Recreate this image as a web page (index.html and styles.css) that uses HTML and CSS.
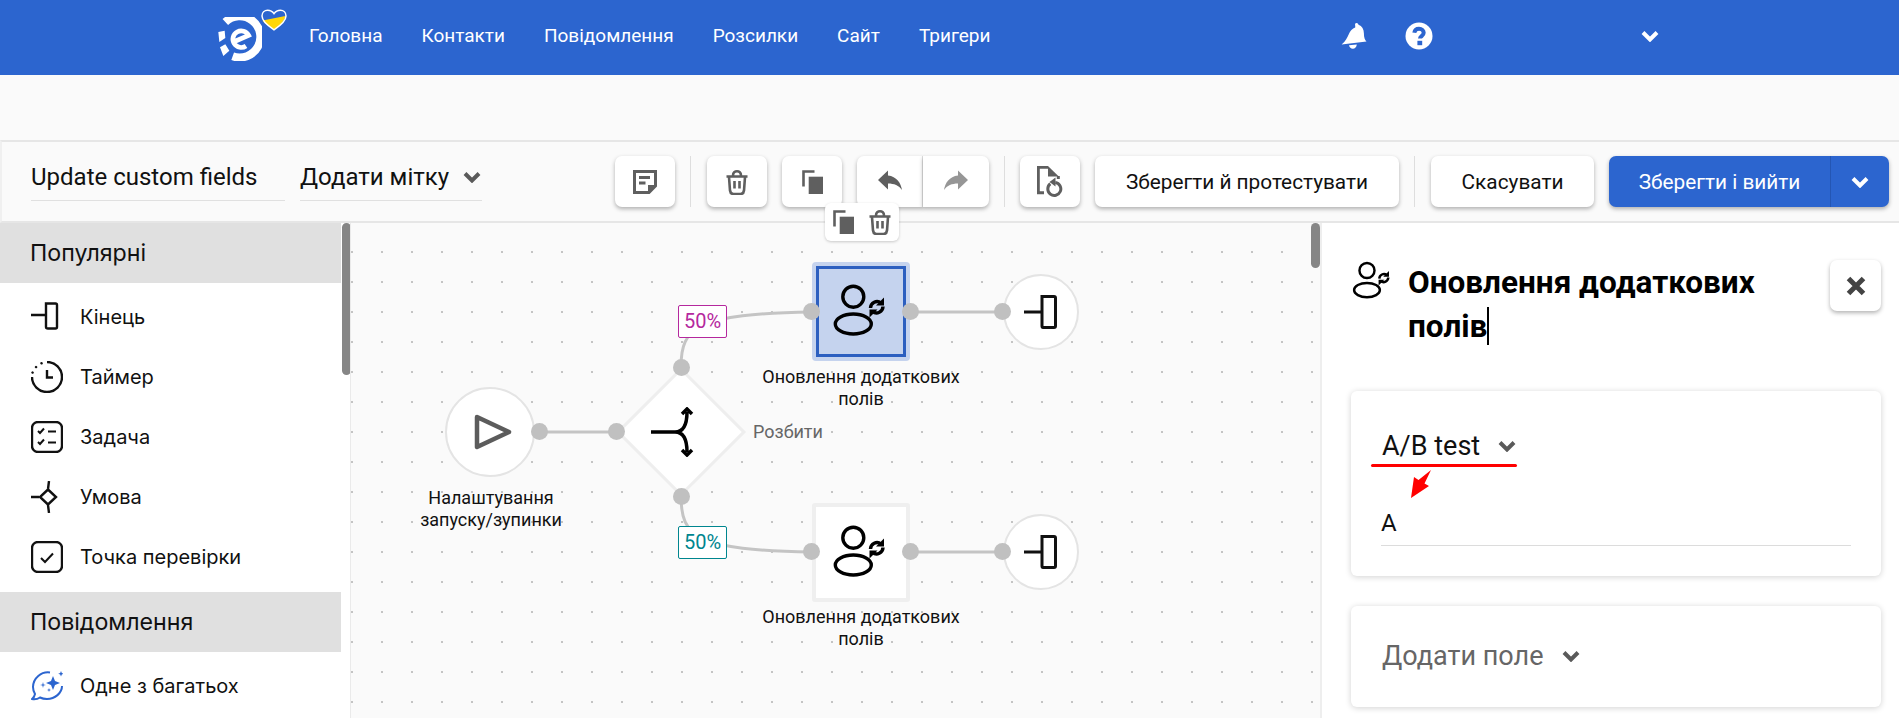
FILE: index.html
```html
<!DOCTYPE html>
<html lang="uk">
<head>
<meta charset="utf-8">
<title>Update custom fields</title>
<link rel="stylesheet" href="styles.css">
</head>
<body>
<header class="topbar">
  <svg class="logo" viewBox="40 50 132 130">
    <path class="logo-ring" d="M62 64 A62 62 0 1 1 84 167"/>
    <path class="logo-e" d="M86 124 L132 104 A25 25 0 1 0 124 136"/>
    <path class="logo-dash" d="M41 94 L60 90 L62 112 L44 124 Z M46 140 L62 131 L74 150 L56 166 Z"/>
  </svg>
  <svg class="heart" viewBox="0 0 26 22">
    <path class="heart-fill" d="M1.6 11.5 L24.4 7 C24 11 20 16 13 20.6 C7 16.5 3 14 1.6 11.5Z"/>
    <path class="heart-line" d="M13 20.8 C5 15.5 1 11 1 7 C1 3.5 3.5 1.2 6.6 1.2 C9.4 1.2 11.6 2.6 13 4.6 C14.4 2.6 16.6 1.2 19.4 1.2 C22.5 1.2 25 3.5 25 7 C25 11 21 15.5 13 20.8Z"/>
  </svg>
  <nav class="nav">
    <a>Головна</a><a>Контакти</a><a>Повідомлення</a><a>Розсилки</a><a>Сайт</a><a>Тригери</a>
  </nav>
  <svg class="bell" viewBox="0 0 26 28"><path d="M14.5 1.2a2 2 0 0 1 3 1.6c3.6 1.4 5.4 4.6 5.4 8.4 0 4.4 1 7 2.6 8.4L.6 22.4c1.6-1 4-3.400 6-7.600 1.600-3.400 3-7.800 7.600-9.400.2-1.800-.2-3-.2-3zM8 23.200l7.800-.8c-.2 2.400-1.800 4.400-4 4.400-1.800 0-3.400-1.600-3.800-3.600z"/></svg>
  <svg class="help" viewBox="0 0 28 28"><circle cx="14" cy="14" r="13.500"/><path class="help-q" d="M9.300 10.800c.4-2.600 2.300-4 4.700-4 2.800 0 4.700 1.700 4.700 4 0 3.200-3.700 3.400-3.700 5.800"/><rect class="help-dot" x="12.400" y="18.800" width="4.800" height="4.400"/></svg>
  <svg class="chev chev-user" viewBox="0 0 18 12"><path d="M2 2.500l7 7 7-7"/></svg>
</header>

<div class="spacer"></div>

<section class="toolbar">
  <div class="field field-name">Update custom fields</div>
  <div class="field field-tag">Додати мітку<svg class="chev chev-dark" viewBox="0 0 18 12"><path d="M2 2.500l7 7 7-7"/></svg></div>
  <button class="btn icon first">
    <svg class="i24" viewBox="0 0 24 24"><path class="s3" d="M1.500 1.500h21v14.500l-6.500 6.500H1.500z"/><path class="s3" d="M6 7.500h11M6 13h6.500"/><path class="f" d="M15 15h9l-9 9z"/></svg>
  </button>
  <i class="sep"></i>
  <button class="btn icon">
    <svg class="i-trash" viewBox="0 0 22 26"><use href="#trash"/></svg>
  </button>
  <button class="btn icon gap">
    <svg class="i-copy" viewBox="0 0 21 24"><use href="#copy"/></svg>
  </button>
  <div class="group gap">
    <button class="btn icon half left">
      <svg class="i24" viewBox="0 0 24 24"><path class="f" d="M10 5.500V.5L0 10l10 9.500v-6c6 0 11 2 14 6.500-1-7-5.500-13.500-14-14.500z"/></svg>
    </button>
    <button class="btn icon half right">
      <svg class="i24 faded" viewBox="0 0 24 24"><path class="f" d="M14 5.500V.5L24 10l-10 9.500v-6c-6 0-11 2-14 6.500 1-7 5.500-13.500 14-14.500z"/></svg>
    </button>
  </div>
  <i class="sep sep-tight"></i>
  <button class="btn icon">
    <svg class="i-doc" viewBox="0 0 26 32"><path class="s3" d="M7 26.700H1.300V1.300H11M21.300 10v3"/><path class="f" d="M11 0l10.800 10.500H11z"/><path class="s3" d="M13.300 17.800a6.500 6.500 0 1 0 5-1.300"/><path class="f" d="M18.500 11.500v9l-6-4.500z"/></svg>
  </button>
  <button class="btn text gap test">Зберегти й протестувати</button>
  <i class="sep"></i>
  <button class="btn text cancel">Скасувати</button>
  <div class="primary">
    <button class="primary-main">Зберегти і вийти</button>
    <button class="primary-more"><svg class="chev" viewBox="0 0 18 12"><path d="M2 2.500l7 7 7-7"/></svg></button>
  </div>
</section>

<main class="workspace">
  <aside class="palette">
    <h3 class="group-title">Популярні</h3>
    <ul class="items">
      <li><svg class="pi" viewBox="0 0 32 32"><path d="M0 14h15M15 2.500h9.500q1.500 0 1.500 1.500v22q0 1.500-1.500 1.500H17q-2 0-2-1.500z"/></svg>Кінець</li>
      <li><svg class="pi" viewBox="0 0 32 32"><path d="M16 1a15 15 0 1 1-15 15"/><path class="dots" d="M1.500 11.500l.1.100M5 6l.1.100M10.500 2.200l.1.100"/><path d="M16 9v7.500h6"/></svg>Таймер</li>
      <li><svg class="pi" viewBox="0 0 32 32"><rect x="1" y="1" width="30" height="30" rx="6"/><path class="thin" d="M7 10l2 2 4-4.500M7 21l2 2 4-4.500M17 10.500h8M17 21.500h8"/></svg>Задача</li>
      <li><svg class="pi" viewBox="0 0 32 32"><path d="M17 8.500l8 7.500-8 7.500-8-7.500zM0 16h8M18 0l-1 8M17 24l1 8"/></svg>Умова</li>
      <li><svg class="pi" viewBox="0 0 32 32"><rect x="1" y="1" width="30" height="30" rx="6"/><path class="thin" d="M10 17l4 4 8-8.500"/></svg>Точка перевірки</li>
    </ul>
    <h3 class="group-title">Повідомлення</h3>
    <ul class="items">
      <li><svg class="pi blue" viewBox="0 0 32 32"><path class="thin" d="M19 2.500A15 15 0 0 0 2 17c0 3 .8 5 2 7-.4 2-1.500 4-3 5 3 .5 6-.2 8-1.500 2 1 4.500 1.500 7 1.500 8 0 15-6 15-13"/><path class="bf" d="M22 6l2 5 5 2-5 2-2 5-2-5-5-2 5-2zM30 1l.8 2 2 .8-2 .8-.8 2-.8-2-2-.8 2-.8zM12 12l.6 2.400 2.400.6-2.400.6-.6 2.400-.6-2.400-2.400-.6 2.400-.6zM18 18l.5 1.500 1.500.5-1.500.5-.5 1.500-.5-1.500-1.500-.5 1.500-.5z"/></svg>Одне з багатьох</li>
    </ul>
    <i class="bar bar-left"></i>
  </aside>

  <section class="canvas">
    <svg class="edges" viewBox="0 0 970 496">
      <path d="M189 210H266"/>
      <path d="M330 145C330 105 345 92 461 90"/>
      <path d="M330 274C330 315 345 328 461 330"/>
      <path d="M559 90H652M559 330H652"/>
    </svg>

    <div class="float-actions">
      <svg class="i-copy" viewBox="0 0 21 24"><use href="#copy"/></svg>
      <svg class="i-trash" viewBox="0 0 22 26"><use href="#trash"/></svg>
    </div>

    <div class="circle start"><svg class="glyph" viewBox="0 0 40 40"><path class="play" d="M5 5l32 15L5 35z"/></svg></div>
    <div class="node-label l-start">Налаштування<br>запуску/зупинки</div>

    <div class="diamond"></div>
    <svg class="split" viewBox="0 0 50 50"><path d="M1 25h24c8 0 12-6 12-20M25 25c8 0 12 6 12 20M32 7l5-5 5 5M32 43l5 5 5-5"/></svg>
    <div class="split-label">Розбити</div>

    <div class="pct pct-a">50%</div>
    <div class="pct pct-b">50%</div>

    <div class="square selected n-a"><svg class="glyph-user" viewBox="0 0 60 60"><use href="#usersync"/></svg></div>
    <div class="node-label l-a">Оновлення додаткових<br>полів</div>
    <div class="square plain n-b"><svg class="glyph-user" viewBox="0 0 60 60"><use href="#usersync"/></svg></div>
    <div class="node-label l-b">Оновлення додаткових<br>полів</div>

    <div class="circle end e-a"><svg class="glyph-end" viewBox="0 0 36 36"><path d="M1 18h18M19 2.500h12q1.500 0 1.500 1.500v28q0 1.500-1.500 1.500H20q-1 0-1-1.500z"/></svg></div>
    <div class="circle end e-b"><svg class="glyph-end" viewBox="0 0 36 36"><path d="M1 18h18M19 2.500h12q1.500 0 1.500 1.500v28q0 1.500-1.500 1.500H20q-1 0-1-1.500z"/></svg></div>

    <i class="port p1"></i><i class="port p2"></i><i class="port p3"></i><i class="port p4"></i>
    <i class="port p5"></i><i class="port p6"></i><i class="port p7"></i>
    <i class="port p8"></i><i class="port p9"></i><i class="port p10"></i>
    <i class="bar bar-right"></i>
  </section>

  <aside class="panel">
    <div class="panel-head">
      <svg class="panel-icon" viewBox="0 0 60 60"><use href="#usersync"/></svg>
      <h2 class="panel-title">Оновлення додаткових полів<span class="caret"></span></h2>
      <button class="btn close"><svg class="x" viewBox="0 0 16 16"><path d="M2 2l12 12M14 2L2 14"/></svg></button>
    </div>
    <div class="card card-ab">
      <div class="select">A/B test<svg class="chev chev-dark" viewBox="0 0 18 12"><path d="M2 2.500l7 7 7-7"/></svg></div>
      <div class="value">A</div>
      <i class="mark-line"></i>
      <svg class="mark-arrow" viewBox="0 0 22 30"><path d="M21 1L14.500 14.500 19 17 1 29 4 8 8.500 11z"/></svg>
    </div>
    <div class="card card-add">
      <div class="select muted">Додати поле<svg class="chev chev-dark" viewBox="0 0 18 12"><path d="M2 2.500l7 7 7-7"/></svg></div>
    </div>
  </aside>
</main>

<svg class="defs" width="0" height="0" aria-hidden="true">
  <defs>
    <g id="trash">
      <path class="ds" d="M.5 7.500h21M7 7.500V6.500C7 .8 15 .8 15 6.500v1M3 8l1 13.500C4.300 24 5.500 25 7.500 25h7c2 0 3.200-1 3.500-3.500L19 8M8.500 12v7.500M13.500 12v7.500"/>
    </g>
    <g id="copy">
      <path class="ds" d="M1.500 16.500V1.500H12.500"/>
      <rect class="df" x="6.700" y="6.700" width="14.300" height="17.300"/>
    </g>
    <g id="usersync">
      <circle class="us" cx="22.300" cy="14.700" r="10.500"/>
      <ellipse class="us" cx="22.300" cy="42" rx="18" ry="10"/>
      <path class="us" d="M39.500 26a6.500 6.500 0 0 1 10.500-5M52 24.500a6.500 6.500 0 0 1-10.500 5"/>
      <path class="uf" d="M53 15.500v8h-8zM38.500 35.500v-8h8z"/>
    </g>
  </defs>
</svg>
</body>
</html>
```
FILE: styles.css
```css
* { box-sizing: border-box; }
html, body { margin: 0; height: 718px; overflow: hidden; }
body { width: 1899px; background: #fafafa; font-family: Roboto, "Liberation Sans", sans-serif; color: #111; }
button { font: inherit; color: inherit; border: 0; padding: 0; background: none; }
ul { list-style: none; margin: 0; padding: 0; }
h2, h3 { margin: 0; }

.topbar { height: 75px; background: #2c65cf; display: flex; align-items: center; position: relative; padding: 0 0 4px 218px; color: #fff; }
.logo { width: 44px; height: 44px; margin-top: 6px; flex: none; }
.logo-ring { fill: none; stroke: #fff; stroke-width: 24; }
.logo-e { fill: none; stroke: #fff; stroke-width: 14; }
.logo-dash { fill: #fff; }
.heart { position: absolute; left: 261px; top: 9px; width: 26px; height: 22px; }
.heart-fill { fill: #ffd70a; }
.heart-line { fill: none; stroke: #fff; stroke-width: 1.5; }
.nav { display: flex; gap: 39px; margin-left: 47px; font-size: 19px; line-height: 24px; }
.bell { width: 26px; height: 28px; fill: #fff; margin-left: 351px; flex: none; }
.help { width: 28px; height: 28px; margin-left: 38px; flex: none; }
.help circle { fill: #fff; }
.help-q { fill: none; stroke: #2c65cf; stroke-width: 4; }
.help-dot { fill: #2c65cf; }
.chev { width: 18px; height: 12px; fill: none; stroke: #fff; stroke-width: 4; flex: none; }
.chev-user { margin-left: 208px; }
.chev-dark { stroke: #5a5a5a; }

.spacer { height: 65px; }

.toolbar { height: 83px; display: flex; align-items: center; padding: 0 0 0 31px; border-top: 2px solid #e6e6e6; border-bottom: 2px solid #e6e6e6; border-left: 2px solid #f0f0f0; background: #fafafa; }
.field { height: 46px; margin-bottom: 8px; font-size: 24px; line-height: 40px; border-bottom: 1px solid #e0e0e0; display: flex; align-items: center; gap: 14px; flex: none; }
.field-name { width: 254px; margin-left: -2px; }
.field-tag { width: 182px; margin-left: 15px; }
.btn { background: #fff; border-radius: 7px; box-shadow: 0 2px 4px rgba(0, 0, 0, .3); height: 51px; display: flex; align-items: center; justify-content: center; flex: none; }
.btn.icon { width: 60px; }
.first { margin-left: 133px; }
.gap { margin-left: 15px; }
.sep { width: 1px; height: 51px; background: #dedede; margin: 0 16px 0 15px; flex: none; }
.sep-tight { margin-right: 15px; }
.group { display: flex; flex: none; }
.btn.half { width: 66px; }
.left { border-radius: 7px 0 0 7px; border-right: 1px solid #e0e0e0; }
.right { border-radius: 0 7px 7px 0; }
.btn.text { font-size: 20.800px; padding: 0; }
.test { width: 304px; }
.cancel { width: 163px; }
.primary { display: flex; height: 51px; margin-left: 15px; border-radius: 7px; background: #2c65cf; box-shadow: 0 2px 4px rgba(0, 0, 0, .3); color: #fff; font-size: 20.800px; flex: none; }
.primary-main { width: 222px; color: #fff; border-right: 1px solid #2456b4; }
.primary-more { width: 58px; display: flex; align-items: center; justify-content: center; }

.i24 { width: 24px; height: 24px; }
.i-trash { width: 22px; height: 26px; }
.i-copy { width: 21px; height: 24px; }
.i-doc { width: 26px; height: 32px; }
.s3 { fill: none; stroke: #5f5f5f; stroke-width: 3; }
.f { fill: #5f5f5f; }
.faded { opacity: .65; }
.ds { fill: none; stroke: #5f5f5f; stroke-width: 2.6; }
.df { fill: #5f5f5f; }

.workspace { height: 495px; display: flex; }
.palette { width: 351px; background: #fff; position: relative; flex: none; overflow: hidden; border-right: 1px solid #eaeaea; }
.group-title { width: 341px; height: 60px; background: #e0e0e0; font-family: Inter, Roboto, sans-serif; font-weight: 400; font-size: 23.200px; line-height: 60px; padding-left: 30px; }
.items { padding: 4px 0 5px; }
.items li { height: 60px; display: flex; align-items: center; font-family: Inter, Roboto, sans-serif; font-size: 20px; padding-left: 31px; gap: 17px; }
.pi { width: 32px; height: 32px; fill: none; stroke: #111; stroke-width: 2.4; flex: none; }
.thin { stroke-width: 2; }
.dots { stroke-linecap: round; stroke-width: 2.400; }
.pi.blue { stroke: #2c65cf; }
.bf { fill: #2c65cf; stroke: none; }
.bar { position: absolute; top: 0; width: 9px; background: #868686; border-radius: 5px; }
.bar-left { left: 342px; height: 152px; }
.bar-right { left: 960px; height: 45px; }

.canvas { width: 969px; position: relative; flex: none; background-color: #fafafa; background-image: radial-gradient(circle, #c4c4c4 1px, transparent 1.300px); background-size: 30px 30px; background-position: -14px -16px; }
.edges { position: absolute; left: 0; top: -1px; width: 970px; height: 496px; }
.edges path { fill: none; stroke: #c4c4c4; stroke-width: 3; }
.float-actions { position: absolute; left: 474px; top: -20px; width: 74px; height: 38px; background: #fff; border-radius: 6px; box-shadow: 0 1px 3px rgba(0, 0, 0, .2); display: flex; align-items: center; justify-content: space-between; padding: 0 8px; z-index: 3; }

.circle { position: absolute; border-radius: 50%; background: #fff; border: 2px solid #e4e4e4; display: flex; align-items: center; justify-content: center; }
.start { left: 94px; top: 164px; width: 90px; height: 90px; }
.glyph { width: 40px; height: 40px; margin-left: 3px; }
.play { fill: none; stroke: #5c5c5c; stroke-width: 4.500; stroke-linejoin: round; }
.end { width: 76px; height: 76px; }
.e-a { left: 652px; top: 51px; }
.e-b { left: 652px; top: 291px; }
.glyph-end { width: 36px; height: 36px; fill: none; stroke: #111; stroke-width: 3; }
.node-label { position: absolute; text-align: center; font-size: 18px; line-height: 22px; white-space: nowrap; transform: translateX(-50%); }
.l-start { left: 140px; top: 264px; }
.l-a { left: 510px; top: 143px; }
.l-b { left: 510px; top: 383px; }

.diamond { position: absolute; left: 284px; top: 163px; width: 92px; height: 92px; background: #fff; border: 3px solid #eeeeee; transform: rotate(45deg); }
.split { position: absolute; left: 299px; top: 184px; width: 50px; height: 50px; fill: none; stroke: #000; stroke-width: 3.500; }
.split-label { position: absolute; left: 402px; top: 198px; font-size: 18px; line-height: 22px; color: #666; }

.pct { position: absolute; left: 327px; width: 49px; height: 33px; background: #fff; border: 1px solid; border-radius: 2px; font-size: 20px; line-height: 31px; text-align: center; }
.pct-a { top: 82px; border-color: #b5289e; color: #b5289e; }
.pct-b { top: 303px; border-color: #00868f; color: #00868f; }

.square { position: absolute; left: 461px; width: 98px; height: 99px; display: flex; align-items: center; justify-content: center; border-radius: 3px; }
.n-a { top: 39px; }
.n-b { top: 280px; }
.selected { background: #c5d3ee; border: 4px solid #c5d3ee; box-shadow: inset 0 0 0 3px #2c5fc0; border-radius: 4px; }
.plain { background: #fff; border: 4px solid #efefef; }
.glyph-user { width: 60px; height: 60px; }
.us { fill: none; stroke: #000; stroke-width: 3.400; }
.uf { fill: #000; }

.port { position: absolute; width: 17px; height: 17px; border-radius: 50%; background: #c0c0c0; z-index: 2; }
.p1 { left: 180px; top: 200px; }
.p2 { left: 257px; top: 200px; }
.p3 { left: 322px; top: 136px; }
.p4 { left: 322px; top: 265px; }
.p5 { left: 452px; top: 80px; }
.p6 { left: 551px; top: 80px; }
.p7 { left: 643px; top: 80px; }
.p8 { left: 452px; top: 320px; }
.p9 { left: 551px; top: 320px; }
.p10 { left: 643px; top: 320px; }

.panel { width: 579px; background: #fff; border-left: 2px solid #eeeeee; flex: none; position: relative; }
.panel-head { display: flex; align-items: flex-start; height: 168px; padding: 38px 18px 0 31px; }
.panel-icon { width: 43px; height: 43px; flex: none; margin: -1px 0 0 -2px; }
.panel-title { width: 400px; margin-left: 14px; font-size: 31.500px; line-height: 44px; font-weight: 700; color: #000; }
.caret { display: inline-block; width: 1.5px; height: 38px; background: #000; vertical-align: -8px; }
.btn.close { width: 51px; height: 51px; margin: -1px 0 0 22px; }
.x { width: 20px; height: 20px; fill: none; stroke: #444; stroke-width: 4; }
.card { margin: 0 18px 30px 29px; background: #fff; border-radius: 6px; box-shadow: 0 1px 6px rgba(0, 0, 0, .18); position: relative; }
.card-ab { height: 185px; padding: 40px 30px 0 30px; }
.card-add { height: 101px; padding: 35px 30px 0 30px; }
.select { font-size: 27px; line-height: 30px; display: flex; align-items: center; gap: 18px; padding-left: 1px; }
.muted { color: #666; }
.value { margin-top: 47px; height: 38px; font-size: 24px; line-height: 30px; border-bottom: 1px solid #dcdcdc; }
.mark-line { position: absolute; left: 20px; top: 73px; width: 146px; height: 3px; background: #ff0000; border-radius: 2px; }
.mark-arrow { position: absolute; left: 59px; top: 78px; width: 22px; height: 30px; fill: #ff0000; }
.defs { position: absolute; }
```
